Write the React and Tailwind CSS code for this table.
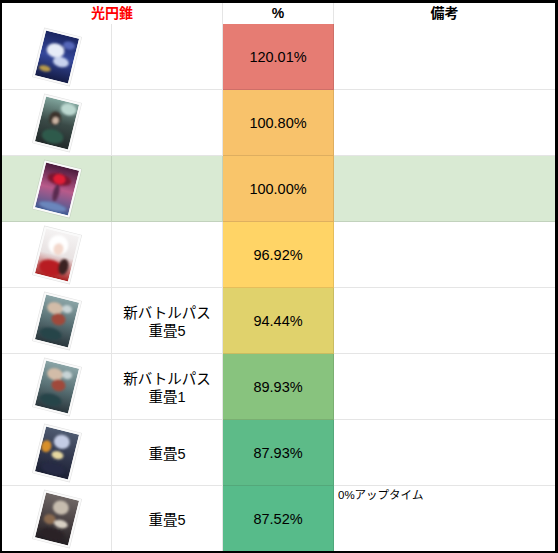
import React from "react";

const cards = [
  {
    grad: ["#1a2560", "#34479a", "#151c45"],
    shapes: [
      { cx: 22, cy: 24, rx: 9, ry: 7, f: "#e6ebf7" },
      { cx: 30, cy: 34, rx: 8, ry: 5, f: "#c9d3ee" },
      { cx: 16, cy: 44, rx: 6, ry: 3, f: "#b89a4a" },
      { cx: 34, cy: 16, rx: 6, ry: 4, f: "#5466b8" },
    ],
  },
  {
    grad: ["#7fa39b", "#3a4a47", "#222a2a"],
    shapes: [
      { cx: 33, cy: 14, rx: 8, ry: 6, f: "#bcd8d0" },
      { cx: 22, cy: 26, rx: 6, ry: 7, f: "#3a302c" },
      { cx: 23, cy: 28, rx: 3, ry: 3.5, f: "#cdb6a4" },
      { cx: 24, cy: 44, rx: 11, ry: 7, f: "#2f5a4c" },
    ],
  },
  {
    grad: ["#4a1a3c", "#b85a8a", "#3e5a92"],
    shapes: [
      { cx: 25, cy: 20, rx: 12, ry: 6, f: "#7a1630" },
      { cx: 25, cy: 20, rx: 6, ry: 5, f: "#e01c34" },
      { cx: 25, cy: 34, rx: 3, ry: 9, f: "#5a2a50" },
      { cx: 25, cy: 48, rx: 14, ry: 4, f: "#6a86bc" },
    ],
  },
  {
    grad: ["#f4f2f2", "#e8e2e2", "#a82020"],
    shapes: [
      { cx: 24, cy: 20, rx: 10, ry: 10, f: "#ffffff" },
      { cx: 25, cy: 24, rx: 5, ry: 6, f: "#f3d8cc" },
      { cx: 22, cy: 44, rx: 12, ry: 8, f: "#b81c22" },
      { cx: 34, cy: 40, rx: 5, ry: 8, f: "#3a2424" },
    ],
  },
  {
    grad: ["#8aa4a6", "#5a7276", "#2a363c"],
    shapes: [
      { cx: 20, cy: 18, rx: 8, ry: 6, f: "#d2bca8" },
      { cx: 26, cy: 28, rx: 7, ry: 6, f: "#a04a3a" },
      { cx: 32, cy: 16, rx: 5, ry: 4, f: "#c8d4d6" },
      { cx: 22, cy: 44, rx: 11, ry: 6, f: "#28444a" },
    ],
  },
  {
    grad: ["#8aa4a6", "#5a7276", "#2a363c"],
    shapes: [
      { cx: 20, cy: 18, rx: 8, ry: 6, f: "#d2bca8" },
      { cx: 26, cy: 28, rx: 7, ry: 6, f: "#a04a3a" },
      { cx: 32, cy: 16, rx: 5, ry: 4, f: "#c8d4d6" },
      { cx: 22, cy: 44, rx: 11, ry: 6, f: "#28444a" },
    ],
  },
  {
    grad: ["#4e5a70", "#343a50", "#1c2034"],
    shapes: [
      { cx: 27, cy: 18, rx: 8, ry: 7, f: "#c4cce4" },
      { cx: 13, cy: 26, rx: 5, ry: 6, f: "#d8902c" },
      { cx: 26, cy: 32, rx: 6, ry: 4, f: "#e6d8a0" },
      { cx: 25, cy: 46, rx: 12, ry: 6, f: "#262a44" },
    ],
  },
  {
    grad: ["#6e6664", "#4a4244", "#221e22"],
    shapes: [
      { cx: 26, cy: 18, rx: 8, ry: 7, f: "#c6bcae" },
      { cx: 18, cy: 32, rx: 6, ry: 5, f: "#8a6a50" },
      { cx: 30, cy: 34, rx: 7, ry: 4, f: "#d8d0c4" },
      { cx: 24, cy: 46, rx: 12, ry: 6, f: "#2a2228" },
    ],
  },
];

// tilted card thumbnail
function Card({ i }) {
  const c = cards[i];
  return (
    <svg width="50" height="60" viewBox="0 0 50 60">
      <defs>
        <linearGradient id={`cg${i}`} x1="0" y1="0" x2="0" y2="1">
          <stop offset="0" stopColor={c.grad[0]} />
          <stop offset="0.5" stopColor={c.grad[1]} />
          <stop offset="1" stopColor={c.grad[2]} />
        </linearGradient>
        <clipPath id={`cc${i}`}>
          <rect x="8" y="7" width="34" height="46" />
        </clipPath>
        <filter id={`cb${i}`}>
          <feGaussianBlur stdDeviation="1" />
        </filter>
      </defs>
      <g transform="rotate(14 25 30)">
        <rect x="5.5" y="4.5" width="39" height="51" fill="#000" opacity="0.12" />
        <rect x="6" y="5" width="38" height="50" fill="#fafafa" />
        <g clipPath={`url(#cc${i})`}>
          <rect x="8" y="7" width="34" height="46" fill={`url(#cg${i})`} />
          <g filter={`url(#cb${i})`}>
            {c.shapes.map((s, k) => (
              <ellipse key={k} cx={s.cx} cy={s.cy} rx={s.rx} ry={s.ry} fill={s.f} />
            ))}
          </g>
        </g>
      </g>
    </svg>
  );
}

const rows = [
  { card: 0, note: null, pct: "120.01%", color: "bg-[#e67c73]" },
  { card: 1, note: null, pct: "100.80%", color: "bg-[#f8c26b]" },
  { card: 2, note: null, pct: "100.00%", color: "bg-[#f9c56a]", hl: true },
  { card: 3, note: null, pct: "96.92%", color: "bg-[#ffd466]" },
  { card: 4, note: ["新バトルパス", "重畳5"], pct: "94.44%", color: "bg-[#e0d26c]" },
  { card: 5, note: ["新バトルパス", "重畳1"], pct: "89.93%", color: "bg-[#88c37e]" },
  { card: 6, note: ["重畳5"], pct: "87.93%", color: "bg-[#5dbb88]" },
  { card: 7, note: ["重畳5"], pct: "87.52%", color: "bg-[#57bb8a]", memo: "0%アップタイム", last: true },
];

export default function App() {
  return (
    <div
      className="w-[558px] h-[553px] bg-black pl-[2px] pt-[3px] overflow-hidden text-black"
      style={{ fontFamily: '"Liberation Sans", Arial, "Noto Sans CJK JP", sans-serif' }}
    >
      <div className="w-[553px] h-[548px] bg-white flex flex-col">
        {/* header */}
        <div className="grid grid-cols-[221px_111px_221px] h-[21px] shrink-0 text-[14px] font-bold">
          <div className="flex items-center justify-center border-r border-b border-black/10 text-[#ff0000]">
            光円錐
          </div>
          <div className="flex items-center justify-center border-r border-b border-black/10">%</div>
          <div className="flex items-center justify-center border-b border-black/10">備考</div>
        </div>

        {rows.map((r, i) => {
          const rowBg = r.hl ? "bg-[#d9ead3]" : "bg-white";
          const h = r.last ? "h-[65px]" : "h-[66px] border-b";
          return (
            <div key={i} className="grid grid-cols-[110px_111px_111px_221px] shrink-0">
              <div className={`${h} ${rowBg} border-r border-black/10 flex items-center justify-center`}>
                <Card i={r.card} />
              </div>
              <div
                className={`${h} ${rowBg} border-r border-black/10 flex flex-col items-center justify-center text-[14.5px] leading-[18px] pt-[2px]`}
              >
                {r.note && r.note.map((t, k) => <span key={k}>{t}</span>)}
              </div>
              <div className={`${h} ${r.color} border-r border-black/10 flex items-center justify-center text-[14.5px] pt-[2px]`}>
                {r.pct}
              </div>
              <div className={`${h} ${rowBg} border-black/10 text-[11.5px] leading-[13px] pl-[4px] pt-[3px]`}>
                {r.memo}
              </div>
            </div>
          );
        })}
      </div>
    </div>
  );
}
